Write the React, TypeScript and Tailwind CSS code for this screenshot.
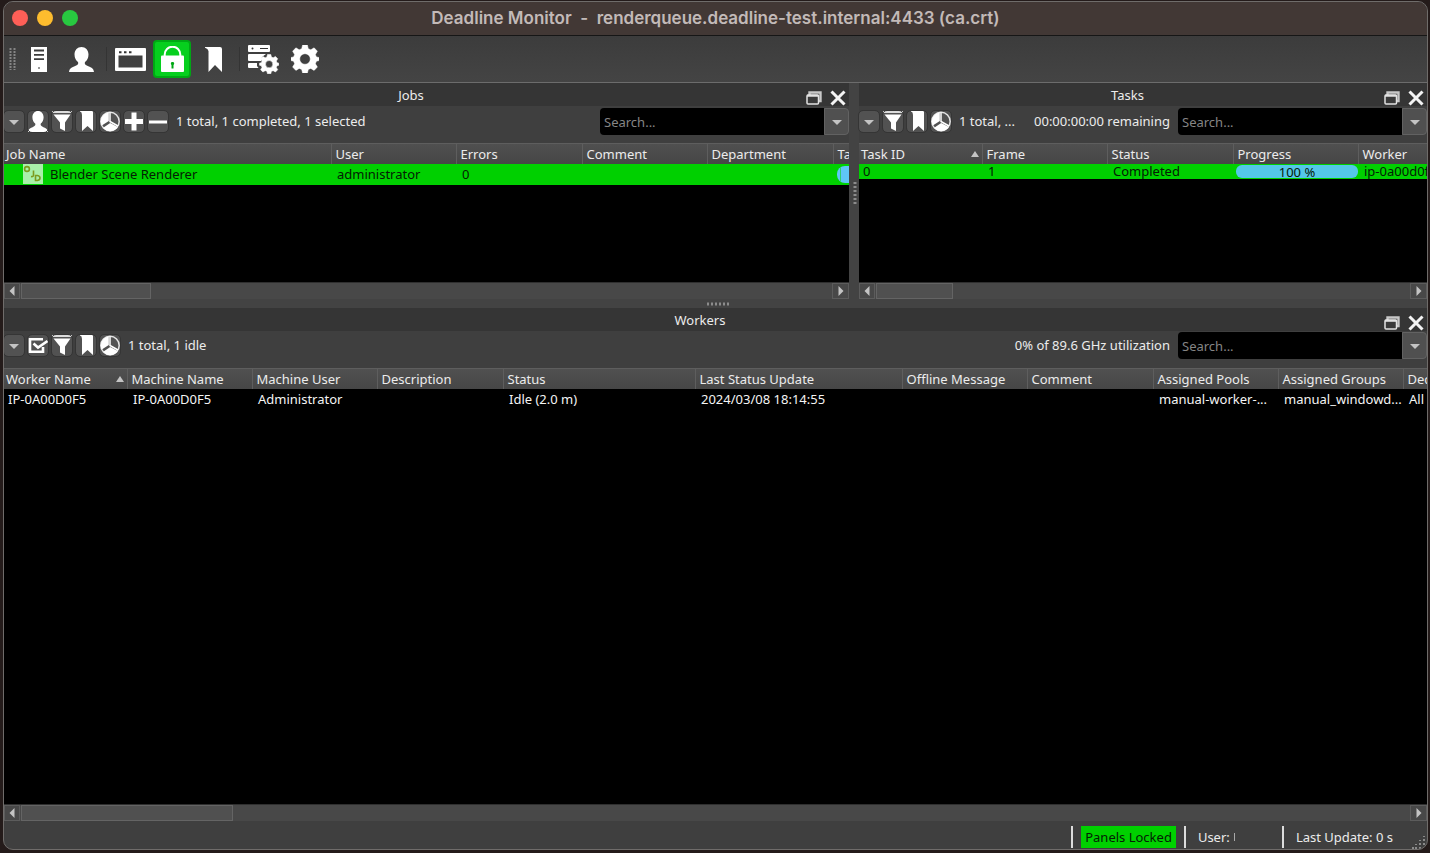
import React, { useState } from "react";
import clsx from "clsx";

interface IColumn {
  label: string;
  width?: string;
  sorted?: boolean;
}

interface IChildren {
  children?: React.ReactNode;
}

const jobColumns: IColumn[] = [
  { label: "Job Name", width: "w-[327px]" },
  { label: "User", width: "w-[125px]" },
  { label: "Errors", width: "w-[126px]" },
  { label: "Comment", width: "w-[125px]" },
  { label: "Department", width: "w-[126px]" },
  { label: "Task Progress" },
];

const taskColumns: IColumn[] = [
  { label: "Task ID", width: "w-[123px]", sorted: true },
  { label: "Frame", width: "w-[125px]" },
  { label: "Status", width: "w-[126px]" },
  { label: "Progress", width: "w-[125px]" },
  { label: "Worker" },
];

const workerColumns: IColumn[] = [
  { label: "Worker Name", width: "w-[123px]", sorted: true },
  { label: "Machine Name", width: "w-[125px]" },
  { label: "Machine User", width: "w-[125px]" },
  { label: "Description", width: "w-[126px]" },
  { label: "Status", width: "w-[192px]" },
  { label: "Last Status Update", width: "w-[207px]" },
  { label: "Offline Message", width: "w-[125px]" },
  { label: "Comment", width: "w-[126px]" },
  { label: "Assigned Pools", width: "w-[125px]" },
  { label: "Assigned Groups", width: "w-[125px]" },
  { label: "Dequeue Mode" },
];

const workerRow = [
  "IP-0A00D0F5",
  "IP-0A00D0F5",
  "Administrator",
  "",
  "Idle (2.0 m)",
  "2024/03/08 18:14:55",
  "",
  "",
  "manual-worker-...",
  "manual_windowd...",
  "All",
];

/* ---------- icons ---------- */

const ServerIcon = () => (
  <svg width="16" height="25" viewBox="0 0 16 25">
    <rect width="16" height="25" fill="#fff" />
    <path d="M3 3.500h10M3 7.800h10M3 12.200h10" stroke="#3c3c3c" strokeWidth="1.800" />
    <circle cx="8" cy="21" r="1" fill="#777" />
  </svg>
);

const UserIcon = ({ className }: { className: string }) => (
  <svg className={className} viewBox="0 0 25 25" preserveAspectRatio="none">
    <path
      d="M12.500 0C8.500 0 5.500 3 5.500 7.500c0 3.500 1.500 6 3.500 7.500 .9 2-.6 3.200-2.800 4C3 20.400.5 21 0 25h25c-.5-4-3-4.600-6.200-6-2.200-.8-3.700-2-2.800-4 2-1.500 3.500-4 3.500-7.500C19.500 3 16.500 0 12.500 0z"
      fill="#fff"
    />
  </svg>
);

const WindowIcon = () => (
  <svg width="31" height="23" viewBox="0 0 31 23">
    <path
      d="M1 0h29q1 0 1 1v21q0 1-1 1H1q-1 0-1-1V1q0-1 1-1zM3.500 7.500v12h24v-12z"
      fill="#fff"
      fillRule="evenodd"
    />
    <path d="M4 4.300h2.500M9 4.300h2.500M14 4.300h2.500" stroke="#333" strokeWidth="2" />
  </svg>
);

const LockIcon = () => (
  <svg width="23" height="26" viewBox="0 0 23 26">
    <path d="M3.700 12V8.500a7.800 7.800 0 0 1 15.600 0V12" fill="none" stroke="#fff" strokeWidth="2" />
    <rect y="9.500" width="23" height="16.500" rx="1" fill="#fff" />
    <path d="M11.500 16v6.500" stroke="#00a814" strokeWidth="2" />
    <circle cx="11.500" cy="17.500" r="1.600" fill="#00a814" />
  </svg>
);

const BookmarkIcon = () => (
  <svg width="18" height="25" viewBox="0 0 18 25">
    <path d="M0 0h15q2 0 2 2v23l-7-7-6.500 7V4Q3 1.500 0 .8z" fill="#fff" />
  </svg>
);

const gearPath =
  "M11.600 0h4.800l.9 3.700 2.500 1.100 3.300-2 3.300 3.400-2 3.300 1 2.400 2.600.6v3.100l-2.600.6-1 2.600 2 3.200-3.300 3.400-3.300-2-2.500 1-.9 3.600h-4.800l-.9-3.600-2.500-1-3.300 2-3.300-3.400 2-3.200-1-2.600L0 15.600v-3.100l2.600-.6 1-2.400-2-3.300 3.300-3.400 3.300 2 2.500-1.100zM14 8.700a5.300 5.300 0 1 0 0 10.600 5.300 5.300 0 0 0 0-10.600z";

const GearIcon = () => (
  <svg width="28" height="28" viewBox="0 0 28 28">
    <path d={gearPath} fill="#fff" fillRule="evenodd" stroke="#fff" strokeLinejoin="round" strokeWidth=".5" />
  </svg>
);

const ServerGearIcon = () => (
  <svg width="31" height="29" viewBox="0 0 31 29">
    <path
      d="M1 0h20q1 0 1 1v5q0 1-1 1H1q-1 0-1-1V1q0-1 1-1zM1 9h17l-4 3-1 4H1q-1 0-1-1v-5q0-1 1-1zM1 18h8v3l1.500 2H1q-1 0-1-1v-3q0-1 1-1z"
      fill="#fff"
    />
    <circle cx="4.500" cy="3.500" r="1" fill="#333" />
    <path d="M12 3.500h8" stroke="#333" strokeWidth="1.200" />
    <g transform="translate(11.500 9.500) scale(.69)">
      <path d={gearPath} fill="#fff" fillRule="evenodd" stroke="#fff" strokeLinejoin="round" strokeWidth=".8" />
    </g>
  </svg>
);

const FilterIcon = () => (
  <svg width="20" height="21" viewBox="0 0 20 21">
    <path d="M0 0h20v2H0z" fill="#dcdcdc" />
    <path d="M1.500 3.500h17L13 11.500V20l-5-2.500v-6z" fill="#fff" />
  </svg>
);

const SmallBookmarkIcon = () => (
  <svg width="20" height="21" viewBox="0 0 20 21">
    <path d="M4 0h12q1 0 1 1v19l-5.500-5L6 20V4Q6 1 4 .6z" fill="#fff" />
  </svg>
);

const PieIcon = () => (
  <svg width="20" height="21" viewBox="0 0 20 21">
    <circle cx="10" cy="10.500" r="9.200" fill="none" stroke="#e4e4e4" strokeWidth="1.500" />
    <path d="M8.800 1.500v8.400L1.800 14.500A9 9 0 0 1 8.800 1.500z" fill="#fff" />
    <path d="M3.200 16.800l7-4.800 7.600 4A9 9 0 0 1 3.200 16.800z" fill="#fff" />
    <path d="M10 1.500v9l8 4.500" fill="none" stroke="#fff" strokeWidth="1.500" />
  </svg>
);

const PlusIcon = ({ minus }: { minus?: boolean }) => (
  <svg width="20" height="21" viewBox="0 0 20 21">
    <path d={minus ? "M1 11h18" : "M1 10.500h18M10 1.500v18"} stroke="#fff" strokeWidth={minus ? 3 : 5} />
  </svg>
);

const CheckIcon = () => (
  <svg width="20" height="21" viewBox="0 0 20 21">
    <path d="M15 4.300H2v12.500h13V12" fill="none" stroke="#fff" strokeWidth="2.600" />
    <path d="M5.500 8.500l4.500 4 9.500-6.500" fill="none" stroke="#fff" strokeWidth="2.600" />
  </svg>
);

const RestoreIcon = () => (
  <svg width="16" height="14" viewBox="0 0 16 14">
    <path d="M3.500 4V1.500h11V10h-2" fill="none" stroke="#c8c8c8" strokeWidth="2.400" />
    <rect x="1" y="4" width="11.500" height="9" rx="1" fill="#3a3a3a" stroke="#e2e2e2" strokeWidth="1.500" />
    <path d="M1 4.800h11.500" stroke="#e2e2e2" strokeWidth="2" />
  </svg>
);

const CloseIcon = () => (
  <svg width="16" height="16" viewBox="0 0 16 16">
    <path d="M1.500 1.500l13 13M14.500 1.500l-13 13" stroke="#f4f4f4" strokeWidth="3" />
  </svg>
);

const Arrow = ({ d }: { d: string }) => (
  <svg width="10" height="10" viewBox="0 0 10 10">
    <path d={d} fill="#c4c4c4" />
  </svg>
);

const arrows = {
  down: "M0 3h10L5 8z",
  up: "M1 8h8L5 2z",
  left: "M7.500 0v10L2.500 5z",
  right: "M2.500 0v10l5-5z",
};

const JobIcon = () => (
  <svg width="20" height="20" viewBox="0 0 20 20">
    <rect width="20" height="20" fill="#a9f0a9" />
    <g fill="none" stroke="#7d9a1e" strokeWidth="1.600">
      <circle cx="4" cy="5" r="2.400" />
      <path d="M10.500 6.500v4.500q0 2-2.500 1.500" />
      <path d="M12.500 11.500v5h2q2.500-.5 2.500-2.500t-2.500-2.500z" />
    </g>
  </svg>
);

/* ---------- controls ---------- */

function ToolButton({ label, active, children }: IChildren & { label: string; active?: boolean }) {
  return (
    <button
      aria-label={label}
      aria-pressed={active}
      className={clsx(
        "flex h-[38px] w-[38px] items-center justify-center rounded-sm",
        active ? "border-2 border-[#00a814] bg-[#06cf1e]" : "hover:bg-[#4e4e4e]"
      )}
    >
      {children}
    </button>
  );
}

function SmallButton({ label, children }: IChildren & { label: string }) {
  return (
    <button
      aria-label={label}
      className="flex h-[21px] w-5 shrink-0 items-center justify-center rounded-sm bg-[#525252] outline outline-[#353535]"
    >
      {children}
    </button>
  );
}

function Search({ label }: { label: string }) {
  const [query, setQuery] = useState("");

  return (
    <div className="flex h-[27px] shrink-0">
      <input
        aria-label={label}
        value={query}
        onChange={(e) => setQuery(e.currentTarget.value)}
        type="text"
        placeholder="Search..."
        className="w-[224px] rounded-l-sm bg-black px-1 text-white outline-none placeholder:text-[#858585]"
      />
      <button
        aria-label={label + " options"}
        className="flex w-[25px] items-center justify-center rounded-r-sm border border-[#626262] bg-[#505050]"
      >
        <Arrow d={arrows.down} />
      </button>
    </div>
  );
}

function PanelTitle({ title }: { title: string }) {
  return (
    <div className="flex h-[23px] items-center bg-[#353535] pl-3">
      <h2 className="flex-1 text-center">{title}</h2>
      <div className="flex items-center gap-2 self-end pr-[3px]">
        <button aria-label={"Float " + title}>
          <RestoreIcon />
        </button>
        <button aria-label={"Close " + title}>
          <CloseIcon />
        </button>
      </div>
    </div>
  );
}

function ScrollBar({ thumb }: { thumb: string }) {
  return (
    <div className="flex h-[17px] shrink-0 gap-px border-t border-[#2f2f2f] bg-[#484848]">
      <button
        aria-label="Scroll left"
        className="flex w-4 items-center justify-center border border-[#5c5c5c]"
      >
        <Arrow d={arrows.left} />
      </button>
      <div className="flex-1">
        <div className={clsx("h-full border border-[#646464] bg-[#505050]", thumb)} />
      </div>
      <button
        aria-label="Scroll right"
        className="flex w-[17px] items-center justify-center border border-[#5c5c5c]"
      >
        <Arrow d={arrows.right} />
      </button>
    </div>
  );
}

function DataTable({ columns, children }: IChildren & { columns: IColumn[] }) {
  return (
    <table className="w-full table-fixed">
      <thead>
        <tr className="h-5 bg-linear-to-b from-[#505050] to-[#464646]">
          {columns.map(({ label, width, sorted }) => (
            <th
              key={label}
              className={clsx(
                "overflow-hidden border-t border-[#5e5e5e] py-0 pr-0 pl-0.5 text-left font-normal whitespace-nowrap not-first:border-l not-first:pl-1",
                width
              )}
            >
              <span className="flex items-center justify-between pr-[2px]">
                {label}
                {sorted && <Arrow d={arrows.up} />}
              </span>
            </th>
          ))}
        </tr>
      </thead>
      <tbody>{children}</tbody>
    </table>
  );
}

function Cell({ children }: IChildren) {
  return <td className="py-0 pr-0 pl-1 whitespace-nowrap not-first:pl-[6px]">{children}</td>;
}

const Divider = () => <span className="h-[22px] w-0.5 bg-[#dcdcdc]" />;

export default function App() {
  return (
    <div className="flex min-h-screen bg-[#241b1a] pt-px pr-0.5 pb-[3px] pl-[3px] font-['Noto_Sans',sans-serif] text-[13px] leading-[18px] text-[#ececec]">
      <div className="flex min-w-0 flex-1 flex-col overflow-hidden rounded-[10px] border border-[#6f6c6a] bg-[#3f3f3f]">
        <header className="relative flex h-[34px] shrink-0 items-center gap-[9px] border-b border-[#161616] bg-[#423835] pb-0.5 pl-2">
          <button aria-label="Close window" className="h-4 w-4 rounded-full bg-[#ff5f57]" />
          <button aria-label="Minimize window" className="h-4 w-4 rounded-full bg-[#febc2e]" />
          <button aria-label="Zoom window" className="h-4 w-4 rounded-full bg-[#28c840]" />
          <h1 className="pointer-events-none absolute inset-x-0 text-center font-[Inter,sans-serif] text-[17px] font-semibold whitespace-pre text-[#c2bab8]">
            {"Deadline Monitor  -  renderqueue.deadline-test.internal:4433 (ca.crt)"}
          </h1>
        </header>

        <div className="flex h-[47px] shrink-0 items-center gap-1 border-b border-[#6c6c6c] bg-linear-to-b from-[#3c3c3c] to-[#444444] pl-[5px]">
          <svg width="7" height="22" viewBox="0 0 7 22">
            <path d="M1.500 0v22M5.500 0v22" stroke="#858585" strokeWidth="2" strokeDasharray="2 1" />
          </svg>
          <ToolButton label="Repository">
            <ServerIcon />
          </ToolButton>
          <ToolButton label="User">
            <UserIcon className="h-[25px] w-[25px]" />
          </ToolButton>
          <span className="ml-0.5 h-6 w-px bg-[#343434]" />
          <ToolButton label="Panels">
            <WindowIcon />
          </ToolButton>
          <ToolButton label="Lock panels" active>
            <LockIcon />
          </ToolButton>
          <ToolButton label="Pin layout">
            <BookmarkIcon />
          </ToolButton>
          <span className="ml-0.5 h-6 w-px bg-[#343434]" />
          <ToolButton label="Configure repository">
            <ServerGearIcon />
          </ToolButton>
          <ToolButton label="Options">
            <GearIcon />
          </ToolButton>
        </div>

        <main className="flex min-h-0 flex-1 flex-col">
          <div className="flex">
            <section className="flex min-w-0 flex-[845] flex-col">
              <PanelTitle title="Jobs" />
              <div className="flex h-[37px] items-start gap-1 pt-0.5">
                <div className="flex h-[27px] items-center gap-1">
                  <SmallButton label="Jobs menu">
                    <Arrow d={arrows.down} />
                  </SmallButton>
                  <SmallButton label="My jobs">
                    <UserIcon className="h-[21px] w-5" />
                  </SmallButton>
                  <SmallButton label="Filter jobs">
                    <FilterIcon />
                  </SmallButton>
                  <SmallButton label="Pin jobs">
                    <SmallBookmarkIcon />
                  </SmallButton>
                  <SmallButton label="Job graphs">
                    <PieIcon />
                  </SmallButton>
                  <SmallButton label="Expand all">
                    <PlusIcon />
                  </SmallButton>
                  <SmallButton label="Collapse all">
                    <PlusIcon minus />
                  </SmallButton>
                </div>
                <p className="min-w-0 flex-1 truncate pl-1 leading-[27px]">1 total, 1 completed, 1 selected</p>
                <Search label="Search jobs" />
              </div>
              <div className="min-h-[139px] flex-1 overflow-hidden bg-black">
                <DataTable columns={jobColumns}>
                  <tr className="h-[21px] bg-[#00d000] text-[#042004]">
                    <Cell>
                      <span className="flex items-center gap-[7px] pl-[15px]">
                        <JobIcon />
                        Blender Scene Renderer
                      </span>
                    </Cell>
                    <Cell>administrator</Cell>
                    <Cell>0</Cell>
                    <Cell />
                    <Cell />
                    <td className="py-0 pr-0 pl-1">
                      <div className="h-[17px] w-[120px] overflow-hidden rounded-lg bg-[#5fc6f6] pl-[3px]">
                        <div className="h-full border-l border-[#2fcf70]" />
                      </div>
                    </td>
                  </tr>
                </DataTable>
              </div>
              <ScrollBar thumb="w-[16%]" />
            </section>

            <div className="flex w-[10px] shrink-0 items-center justify-center bg-[#434343] pt-1 pl-0.5">
              <svg width="4" height="22" viewBox="0 0 4 22">
                <path d="M2 0v22" stroke="#8c8c8c" strokeWidth="3" strokeDasharray="2 2" />
              </svg>
            </div>

            <section className="flex min-w-0 flex-[568] flex-col">
              <PanelTitle title="Tasks" />
              <div className="flex h-[37px] items-start gap-1 pt-0.5">
                <div className="flex h-[27px] items-center gap-1">
                  <SmallButton label="Tasks menu">
                    <Arrow d={arrows.down} />
                  </SmallButton>
                  <SmallButton label="Filter tasks">
                    <FilterIcon />
                  </SmallButton>
                  <SmallButton label="Pin tasks">
                    <SmallBookmarkIcon />
                  </SmallButton>
                  <SmallButton label="Task graphs">
                    <PieIcon />
                  </SmallButton>
                </div>
                <p className="min-w-0 flex-1 truncate pl-1 leading-[27px]">1 total, ...</p>
                <p className="pr-1 leading-[27px] whitespace-nowrap">00:00:00:00 remaining</p>
                <Search label="Search tasks" />
              </div>
              <div className="min-h-[139px] flex-1 overflow-hidden bg-black">
                <DataTable columns={taskColumns}>
                  <tr className="h-[15px] bg-[#00d000] leading-[15px] text-[#042004]">
                    <Cell>0</Cell>
                    <Cell>1</Cell>
                    <Cell>Completed</Cell>
                    <td className="px-0 py-0 pl-[3px]">
                      <div className="h-[13px] rounded-md bg-[#54c8e8] text-center leading-[14px]">100 %</div>
                    </td>
                    <Cell>ip-0a00d0f5</Cell>
                  </tr>
                </DataTable>
              </div>
              <ScrollBar thumb="w-[14.5%]" />
            </section>
          </div>

          <div className="flex h-[9px] shrink-0 items-center justify-center bg-[#434343] pl-1">
            <svg width="24" height="4" viewBox="0 0 24 4">
              <path d="M1 2h22" stroke="#8c8c8c" strokeWidth="3" strokeDasharray="2 2" />
            </svg>
          </div>

          <section className="flex min-h-0 flex-1 flex-col">
            <PanelTitle title="Workers" />
            <div className="flex h-[37px] items-start gap-1 pt-px">
              <div className="flex h-[27px] items-center gap-1">
                <SmallButton label="Workers menu">
                  <Arrow d={arrows.down} />
                </SmallButton>
                <SmallButton label="Select workers">
                  <CheckIcon />
                </SmallButton>
                <SmallButton label="Filter workers">
                  <FilterIcon />
                </SmallButton>
                <SmallButton label="Pin workers">
                  <SmallBookmarkIcon />
                </SmallButton>
                <SmallButton label="Worker graphs">
                  <PieIcon />
                </SmallButton>
              </div>
              <p className="min-w-0 flex-1 truncate pl-1 leading-[27px]">1 total, 1 idle</p>
              <p className="pr-1 leading-[27px] whitespace-nowrap">0% of 89.6 GHz utilization</p>
              <Search label="Search workers" />
            </div>
            <div className="flex-1 overflow-hidden bg-black">
              <DataTable columns={workerColumns}>
                <tr className="h-5 text-[#f4f4f4]">
                  {workerRow.map((value, i) => (
                    <Cell key={i}>{value}</Cell>
                  ))}
                </tr>
              </DataTable>
            </div>
            <ScrollBar thumb="w-[15.3%]" />
          </section>
        </main>

        <footer className="relative flex h-7 shrink-0 items-center justify-end pt-1 pr-[34px]">
          <Divider />
          <span className="ml-2 bg-[#00d000] px-1 leading-[22px] text-[#042004]">Panels Locked</span>
          <span className="w-2" />
          <Divider />
          <span className="flex w-[96px] items-center gap-1 pl-3">
            User:
            <i className="h-2 w-px bg-[#a8a8a8]" />
          </span>
          <Divider />
          <span className="pl-3">Last Update: 0 s</span>
          <svg className="absolute right-0 bottom-0" width="15" height="15" viewBox="0 0 15 15">
            <path
              d="M12 2v1M12 5v2M8 6v1M12 9v2M8 9v2M4 10v1M12 13v2M8 13v2M4 13v2M1 13v2"
              stroke="#8a8a8a"
              strokeWidth="2"
            />
          </svg>
        </footer>
      </div>
    </div>
  );
}
